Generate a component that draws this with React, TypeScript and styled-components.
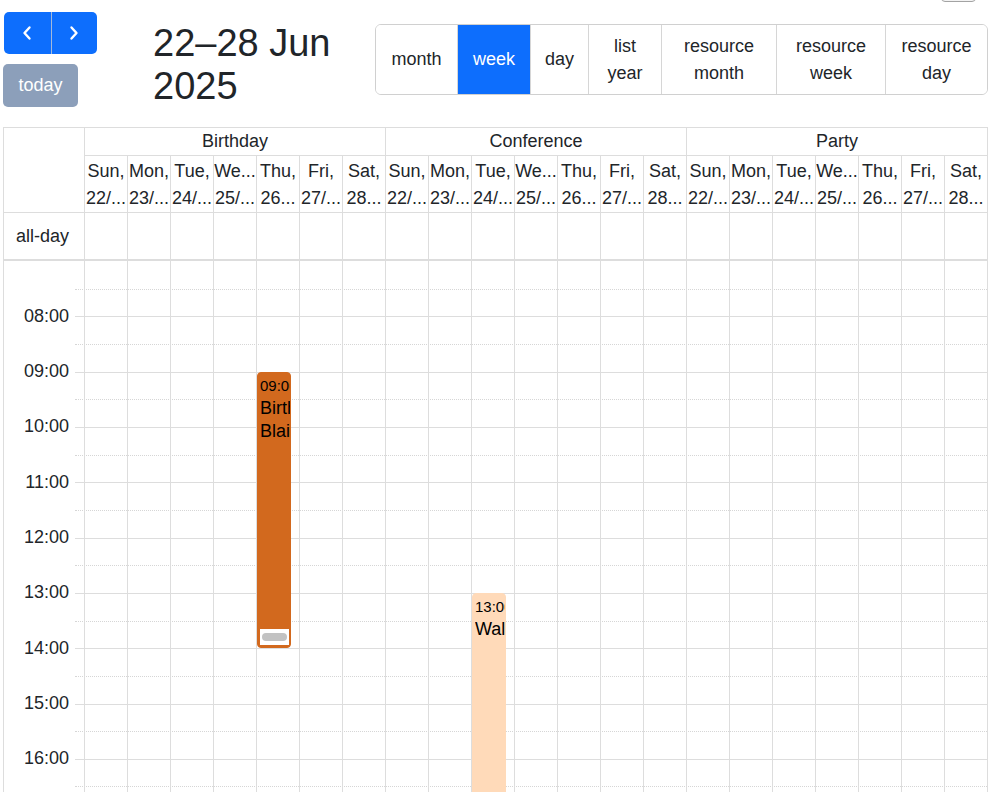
import React from "react";
import styled, { createGlobalStyle } from "styled-components";

const HOUR = 55.333;
const FIRST_HOUR = 7;
const LAST_HOUR = 17;

const GlobalStyle = createGlobalStyle`
  * { box-sizing: border-box; }
  html, body {
    margin: 0;
    padding: 0;
    overflow: hidden;
    background: #fff;
  }
  body {
    font-family: "Liberation Sans", Arial, Helvetica, sans-serif;
    font-size: 18px;
    line-height: 1.5;
    color: #212529;
  }
`;

const Page = styled.div`
  padding: 0 11px 0 3px;
  height: 792px;
  overflow: hidden;
`;

const TopBar = styled.div`
  display: flex;
  justify-content: flex-end;
  height: 0;
`;

const ScrollTab = styled.div`
  width: 35px;
  height: 20px;
  margin-top: -18px;
  margin-right: 12px;
  border: 1px solid #a3a3a3;
  border-radius: 4px;
  background: #f3f3f3;
`;

const Toolbar = styled.div`
  display: flex;
  align-items: flex-start;
  padding-top: 12px;
  margin-bottom: 19px;
`;

const NavColumn = styled.div`
  display: flex;
  flex-direction: column;
  align-items: flex-start;
  gap: 10px;
  width: 94px;
`;

const NavGroup = styled.div`
  display: flex;
  margin-left: 1px;
  border-radius: 5px;
  overflow: hidden;
`;

const NavButton = styled.button`
  width: 46.5px;
  height: 42px;
  padding: 0;
  border: none;
  background: #0d6efd;
  display: flex;
  align-items: center;
  justify-content: center;

  & + & {
    border-left: 1px solid #a4b9da;
  }
`;

const TodayButton = styled.button`
  width: 75px;
  height: 43px;
  padding: 0;
  border: none;
  border-radius: 5px;
  background: #8c9fba;
  color: #fff;
  font-family: inherit;
  font-size: 18px;
  line-height: 27px;
`;

const Title = styled.h2`
  margin: 10px 0 0 56px;
  max-width: 200px;
  font-size: 38px;
  line-height: 43px;
  font-weight: 400;
  color: #212529;
`;

const ViewGroup = styled.div`
  display: flex;
  margin-top: 12px;
  margin-left: auto;
  border: 1px solid #d0d0d0;
  border-radius: 6px;
  overflow: hidden;
`;

const ViewButton = styled.button<{ $w: number; $active?: boolean }>`
  width: ${(p) => p.$w}px;
  padding: 7.5px 0;
  border: none;
  background: ${(p) => (p.$active ? "#0d6efd" : "#fff")};
  color: ${(p) => (p.$active ? "#fff" : "#212529")};
  font-family: inherit;
  font-size: 18px;
  line-height: 27px;
  display: flex;
  align-items: center;
  justify-content: center;
  text-align: center;

  & + & {
    border-left: 1px solid #d6d6d6;
  }
`;

const Calendar = styled.div`
  border: 1px solid #ddd;
  border-bottom: none;
`;

const HeadGrid = styled.div`
  display: grid;
  grid-template-columns: 80px repeat(21, minmax(0, 1fr));
  grid-template-rows: 28px 57px;
`;

const Corner = styled.div`
  grid-row: 1 / span 2;
  border-bottom: 1px solid #ddd;
`;

const ResourceCell = styled.div`
  grid-column: span 7;
  border-left: 1px solid #ddd;
  border-bottom: 1px solid #ddd;
  text-align: center;
  line-height: 27px;
`;

const DayCell = styled.div`
  border-left: 1px solid #ddd;
  border-bottom: 1px solid #ddd;
  padding-top: 2px;
  text-align: center;
  line-height: 27px;
  overflow: hidden;
`;

const DayLine = styled.div`
  white-space: nowrap;
  overflow: hidden;
`;

const AllDayRow = styled.div`
  display: grid;
  grid-template-columns: 80px repeat(21, minmax(0, 1fr));
  height: 48px;
  border-bottom: 2px solid #ddd;
`;

const AllDayLabel = styled.div`
  display: flex;
  align-items: center;
  justify-content: flex-end;
  padding-right: 15px;
`;

const DayColumn = styled.div`
  border-left: 1px solid #ddd;
  position: relative;
`;

const Body = styled.div`
  display: grid;

  & > * {
    grid-area: 1 / 1;
  }
`;

const SlotLayer = styled.div`
  display: flex;
  flex-direction: column;
`;

const SlotRow = styled.div`
  display: flex;
  align-items: flex-start;
  height: ${HOUR / 2}px;
`;

const SlotLabel = styled.div`
  width: 71px;
  flex-shrink: 0;
  height: 27px;
  margin-top: -13.5px;
  padding-right: 6px;
  text-align: right;
  line-height: 27px;
`;

const SlotLane = styled.div<{ $kind: "none" | "hour" | "half" }>`
  flex: 1;
  align-self: stretch;
  border-top: ${(p) =>
    p.$kind === "hour"
      ? "1px solid #ddd"
      : p.$kind === "half"
      ? "1px dotted #d6d6d6"
      : "none"};
`;

const ColumnLayer = styled.div`
  display: grid;
  grid-template-columns: 80px repeat(21, minmax(0, 1fr));
`;

const EventBox = styled.div<{ $bg: string }>`
  position: absolute;
  left: 0;
  right: 8px;
  display: flex;
  flex-direction: column;
  padding: 2px 0 0 2px;
  border: 1px solid ${(p) => p.$bg};
  border-radius: 4px;
  background: ${(p) => p.$bg};
  color: #000;
  overflow: hidden;
`;

const EventTime = styled.div`
  font-size: 15px;
  line-height: 22px;
  white-space: nowrap;
  overflow: hidden;
`;

const EventTitle = styled.div`
  font-size: 18px;
  line-height: 23px;
  overflow: hidden;
`;

const Resizer = styled.div`
  margin: auto 1px 2px 0;
  height: 16px;
  padding: 4px 2px;
  background: #fff;
`;

const ResizerPill = styled.div`
  height: 8px;
  border-radius: 4px;
  background: #c2c2c2;
`;

const resources = ["Birthday", "Conference", "Party"];

const days = [
  ["Sun,", "22/..."],
  ["Mon,", "23/..."],
  ["Tue,", "24/..."],
  ["We...", "25/..."],
  ["Thu,", "26..."],
  ["Fri,", "27/..."],
  ["Sat,", "28..."],
];

type CalEvent = {
  resource: number;
  day: number;
  start: number;
  end: number;
  time: string;
  title: string;
  color: string;
  selected?: boolean;
};

const events: CalEvent[] = [
  {
    resource: 0,
    day: 4,
    start: 9,
    end: 14,
    time: "09:00 - 14:00",
    title: "Birthday Blair",
    color: "#d2691e",
    selected: true,
  },
  {
    resource: 1,
    day: 2,
    start: 13,
    end: 18,
    time: "13:00 - 18:00",
    title: "Walkathon",
    color: "#ffdab9",
  },
];

const Chevron = ({ dir }: { dir: "left" | "right" }) => (
  <svg width="10" height="16" viewBox="0 0 10 16" fill="none">
    <polyline
      points={dir === "left" ? "7.5,2.5 2.5,8 7.5,13.5" : "2.5,2.5 7.5,8 2.5,13.5"}
      stroke="#fff"
      strokeWidth="2.4"
      strokeLinecap="round"
      strokeLinejoin="round"
    />
  </svg>
);

const pad = (n: number) => String(n).padStart(2, "0");

const App = () => {
  const slots: { label?: string; kind: "none" | "hour" | "half" }[] = [];
  for (let h = FIRST_HOUR; h < LAST_HOUR; h++) {
    slots.push({
      label: h === FIRST_HOUR ? undefined : `${pad(h)}:00`,
      kind: h === FIRST_HOUR ? "none" : "hour",
    });
    slots.push({ kind: "half" });
  }
  // trailing hour line without a label, runs past the bottom of the window
  slots.push({ kind: "hour" });

  const columns = resources.flatMap((_, r) => days.map((_, d) => ({ r, d })));

  return (
    <>
      <GlobalStyle />
      <Page>
        <TopBar>
          <ScrollTab />
        </TopBar>
        <Toolbar>
          <NavColumn>
            <NavGroup>
              <NavButton aria-label="prev">
                <Chevron dir="left" />
              </NavButton>
              <NavButton aria-label="next">
                <Chevron dir="right" />
              </NavButton>
            </NavGroup>
            <TodayButton>today</TodayButton>
          </NavColumn>
          <Title>22–28 Jun 2025</Title>
          <ViewGroup>
            <ViewButton $w={81}>month</ViewButton>
            <ViewButton $w={73} $active>
              week
            </ViewButton>
            <ViewButton $w={58}>day</ViewButton>
            <ViewButton $w={73}>
              list
              <br />
              year
            </ViewButton>
            <ViewButton $w={115}>
              resource
              <br />
              month
            </ViewButton>
            <ViewButton $w={109}>
              resource
              <br />
              week
            </ViewButton>
            <ViewButton $w={102}>
              resource
              <br />
              day
            </ViewButton>
          </ViewGroup>
        </Toolbar>

        <Calendar>
          <HeadGrid>
            <Corner />
            {resources.map((r) => (
              <ResourceCell key={r}>{r}</ResourceCell>
            ))}
            {columns.map(({ r, d }) => (
              <DayCell key={`${r}-${d}`}>
                <DayLine>{days[d][0]}</DayLine>
                <DayLine>{days[d][1]}</DayLine>
              </DayCell>
            ))}
          </HeadGrid>

          <AllDayRow>
            <AllDayLabel>all-day</AllDayLabel>
            {columns.map(({ r, d }) => (
              <DayColumn key={`${r}-${d}`} />
            ))}
          </AllDayRow>

          <Body>
            <SlotLayer>
              {slots.map((s, i) => (
                <SlotRow key={i}>
                  <SlotLabel>{s.label}</SlotLabel>
                  <SlotLane $kind={s.kind} />
                </SlotRow>
              ))}
            </SlotLayer>
            <ColumnLayer>
              <div />
              {columns.map(({ r, d }) => (
                <DayColumn key={`${r}-${d}`}>
                  {events
                    .filter((e) => e.resource === r && e.day === d)
                    .map((e) => (
                      <EventBox
                        key={e.title}
                        $bg={e.color}
                        style={{
                          top: (e.start - FIRST_HOUR) * HOUR,
                          height: (e.end - e.start) * HOUR,
                        }}
                      >
                        <EventTime>{e.time}</EventTime>
                        <EventTitle>{e.title}</EventTitle>
                        {e.selected && (
                          <Resizer>
                            <ResizerPill />
                          </Resizer>
                        )}
                      </EventBox>
                    ))}
                </DayColumn>
              ))}
            </ColumnLayer>
          </Body>
        </Calendar>
      </Page>
    </>
  );
};

export default App;
